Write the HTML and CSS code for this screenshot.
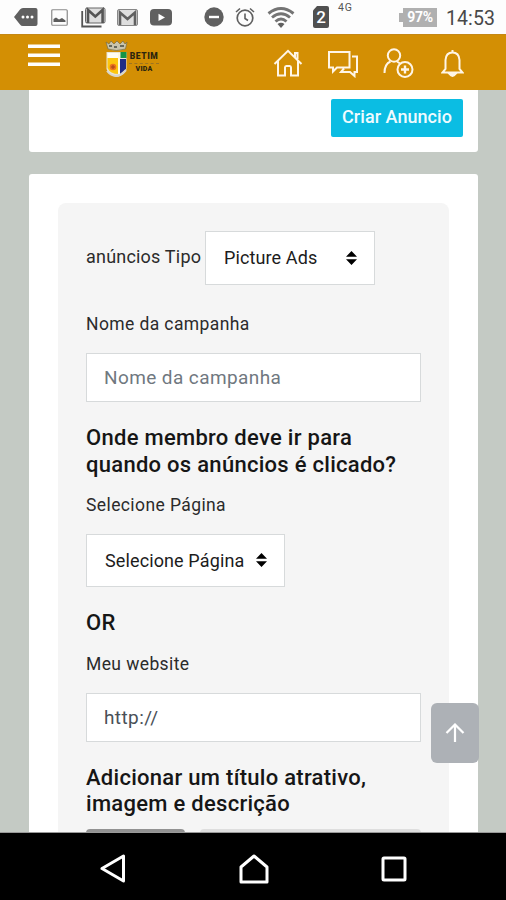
FILE: index.html
```html
<!DOCTYPE html>
<html lang="pt-BR">
<head>
<meta charset="utf-8">
<title>Criar Anuncio</title>
<link rel="stylesheet" href="styles.css">
</head>
<body>
<div class="phone">
  <div class="status">
    <svg class="s-more" width="24" height="18" viewBox="0 0 24 18"><path d="M0 9 6 1.5Q7 0 9 0H21.500Q23.500 0 23.500 2V16Q23.500 18 21.500 18H9Q7 18 6 16.500Z" fill="#606060"/><g fill="#fff"><circle cx="9" cy="9" r="1.500"/><circle cx="13.500" cy="9" r="1.500"/><circle cx="18" cy="9" r="1.500"/></g></svg>
    <svg class="s-pic" width="17" height="17" viewBox="0 0 17 17"><rect x=".75" y=".75" width="15.500" height="15.500" rx="1" fill="#fcfcfc" stroke="#8a8a8a" stroke-width="1.200"/><path d="M2.500 13V10L5 8.500 8 10.500 11 9 14.500 11.500V13Z" fill="#5c5c5c"/></svg>
    <svg class="s-mails" width="25" height="21" viewBox="0 0 25 21"><path d="M1.200 4V19.500H20.500" fill="none" stroke="#555" stroke-width="1.800"/><rect x="4.500" y="1" width="19.500" height="15" rx="1.500" fill="#dedede" stroke="#666"/><path d="M7 16V3L14.300 9.500 21.600 3V16" fill="none" stroke="#555" stroke-width="2.600"/></svg>
    <svg class="s-mail" width="21" height="17" viewBox="0 0 21 17"><rect x=".5" y=".5" width="20" height="16" rx="1.500" fill="#dedede" stroke="#888"/><path d="M3 16V3.500L10.500 10 18 3.500V16" fill="none" stroke="#606060" stroke-width="2.600"/></svg>
    <svg class="s-play" width="22" height="17" viewBox="0 0 22 17"><rect width="22" height="16.500" rx="4" fill="#606060"/><path d="M8.500 4.800V12L15 8.400Z" fill="#fff"/></svg>
    <svg class="s-dnd" width="20" height="20" viewBox="0 0 20 20"><circle cx="10" cy="10" r="9.700" fill="#606060"/><path d="M5 10H15" stroke="#fff" stroke-width="2.400"/></svg>
    <svg class="s-alarm" width="20" height="20" viewBox="0 0 20 20" fill="none" stroke="#606060"><circle cx="10" cy="11" r="7.800" stroke-width="1.700"/><path d="M10 6.500V11.500L13 13.500M1 5 5 1.500M15 1.500 19 5" stroke-width="1.600"/></svg>
    <svg class="s-wifi" width="28" height="22" viewBox="0 0 28 22" fill="none" stroke="#747474" stroke-width="2.900"><path d="M1.500 6.500Q14-3.500 26.500 6.500M5 10.500Q14 3 23 10.500M8.500 14.500Q14 9.500 19.500 14.500"/><path d="M10.500 17Q14 14.500 17.500 17L14 21Z" fill="#606060" stroke="none"/></svg>
    <span class="sim">2</span>
    <span class="net">4G</span>
    <span class="batt">97%</span>
    <span class="clock">14:53</span>
  </div>
  <header class="bar">
    <svg class="menu" width="32" height="23" viewBox="0 0 32 23"><path d="M0 2.200H32M0 11.200H32M0 20.200H32" stroke="#fff" stroke-width="3.600"/></svg>
    <div class="logo">
      <svg width="23" height="38" viewBox="0 0 23 38"><path d="M1 2 4 4 6 1 9 4 12 1 15 4 18 1 20 4 22 2 20.500 9Q11 12 3 9Z" fill="#c9c4ac" stroke="#796f45" stroke-width=".7"/><path d="M4 6H7M9 7H12M15 6H19" stroke="#454b41" stroke-width="1.500"/><path d="M1.500 12H21.500V29Q20 35 11.500 37Q3 35 1.500 29Z" fill="#e8e4d4"/><path d="M2.500 18H14V34Q5 34 2.500 28Z" fill="#fdc60c"/><path d="M2.500 13H14V18H2.500Z" fill="#fffdf2"/><path d="M15.500 12H21.500V18H15.500Z" fill="#159447"/><path d="M14.500 19H21V29L15 34Z" fill="#202d84"/><path d="M13 13H15V34H13Z" fill="#fff9df"/><circle cx="8" cy="27" r="3.300" fill="#ec731c"/><path d="M6 27H10M8 25V29" stroke="#a54717"/><path d="M2 31Q6 36 11 36T21 30" fill="none" stroke="#d8d5ca" stroke-width="2"/></svg>
      <div class="logo-text"><b>BETIM</b><i></i><b class="vida">VIDA</b></div>
    </div>
    <svg class="i-home" width="30" height="28" viewBox="0 0 30 28"><path d="M1.500 15 15 1.800 28.500 15M5 12V26.500H12V18.500Q12 17 13.300 17H16.700Q18 17 18 18.500V26.500H25V12M22 8V4H24.500V10"/></svg>
    <svg class="i-chat" width="32" height="28" viewBox="0 0 32 28"><path d="M2 2H22.500V17.500H10L6 21.500V17.500H2ZM25 6.500H30V22H27.500V26L23 22H14L17 18.500"/></svg>
    <svg class="i-user" width="31" height="30" viewBox="0 0 31 30"><circle cx="11" cy="7.500" r="6.200"/><path d="M1.500 25Q1.500 16 7.500 13.500M14 13.500 17 15.500"/><circle cx="22" cy="21.500" r="7.500"/><path d="M22 17.500V25.500M18 21.500H26" stroke-width="2.400"/></svg>
    <svg class="i-bell" width="23" height="29" viewBox="0 0 23 29"><path d="M1.500 23.500H21.500L18.500 20V11Q18 3.500 11.500 3.500T4.500 11V20Z"/><path d="M8.500 25Q11.500 29 14.500 25ZM11.500 1V4"/></svg>
  </header>
  <main class="page">
    <section class="card top"><button class="create">Criar Anuncio</button></section>
    <section class="card">
      <form class="panel">
        <div class="row"><label class="type">anúncios Tipo</label>
          <div class="select short"><span>Picture Ads</span><svg width="11" height="14" viewBox="0 0 11 14"><path d="M0 5.700 5.500 0 11 5.700ZM0 8.300 5.500 14 11 8.300Z"/></svg></div></div>
        <label class="label campaign">Nome da campanha</label>
        <div class="input hint"><span>Nome da campanha</span></div>
        <h2>Onde membro deve ir para<br>quando os anúncios é clicado?</h2>
        <label class="label">Selecione Página</label>
        <div class="select long"><span>Selecione Página</span><svg width="11" height="14" viewBox="0 0 11 14"><path d="M0 5.700 5.500 0 11 5.700ZM0 8.300 5.500 14 11 8.300Z"/></svg></div>
        <h2>OR</h2>
        <label class="label">Meu website</label>
        <div class="input"><span class="url">http://</span></div>
        <h2>Adicionar um título atrativo,<br>imagem e descrição</h2>
        <div class="tabs"><i class="dark"></i><i class="light"></i></div>
      </form>
    </section>
  </main>
  <div class="up"><svg width="20" height="20" viewBox="0 0 20 20"><path d="M10 19V2M1.500 10 10 1.500 18.500 10" fill="none" stroke="#fff" stroke-width="2.200"/></svg></div>
  <nav class="nav">
    <svg class="back" width="26" height="29" viewBox="0 0 26 29"><path d="M2 14.500 23.500 2V27Z"/></svg>
    <svg class="home" width="30" height="30" viewBox="0 0 30 30"><path d="M2 28V13L15 2 28 13V28Z"/></svg>
    <svg class="recent" width="26" height="26" viewBox="0 0 26 26"><rect x="2" y="2" width="22" height="22" rx="1"/></svg>
  </nav>
</div>
</body>
</html>
```

FILE: styles.css
```css
* { box-sizing: border-box; }
body { margin: 0; font-family: Roboto, "Liberation Sans", sans-serif; color: #2b2b2b; }
svg { display: block; flex: none; }
.phone { position: relative; width: 506px; height: 900px; overflow: hidden; display: flex; flex-direction: column; background: #c4cac4; }

.status { height: 34px; flex: none; background: #fdfdfd; display: flex; align-items: center; padding-left: 14px; }
.s-pic { margin-left: 13px; }
.s-mails { margin: 0 0 0 13px; }
.s-mail { margin-left: 11px; }
.s-play { margin-left: 12px; }
.s-dnd { margin-left: 32px; }
.s-alarm { margin-left: 11px; }
.s-wifi { margin: 2px 0 0 12px; }
.sim { width: 16px; height: 22px; margin-left: 18px; background: #505050; border-radius: 2px; clip-path: polygon(25% 0, 100% 0, 100% 100%, 0 100%, 0 20%); color: #fff; font-size: 17px; font-weight: 500; line-height: 23px; text-align: center; }
.net { width: 17px; margin: -19px 0 0 9px; font-size: 10.5px; line-height: 12px; letter-spacing: .8px; color: #555; }
.batt { width: 38px; height: 19px; margin-left: 44px; padding-left: 4px; background: linear-gradient(#b0b0b0, #b0b0b0) 4px 0 / 34px 19px no-repeat, linear-gradient(#b0b0b0, #b0b0b0) 0 5px / 4px 9px no-repeat; color: #fff; font-size: 14px; font-weight: 700; line-height: 19px; text-align: center; letter-spacing: -.3px; }
.clock { margin: 3px 0 0 9px; font-size: 19.5px; line-height: 24px; letter-spacing: .1px; color: #484848; }

.bar { height: 56px; flex: none; background: #d38f04; display: flex; align-items: flex-start; padding-left: 28px; border-top: 1px solid #c58814; }
.bar > svg { fill: none; stroke: #fff5e6; stroke-width: 2; }
.menu { margin-top: 9px; }
.logo { display: flex; width: 55px; margin: 5px 0 0 45px; }
.logo-text { width: 32px; display: flex; flex-direction: column; align-items: center; padding-top: 12px; color: #2c250e; }
.logo-text b { font-size: 8.5px; line-height: 9px; font-weight: 900; letter-spacing: .6px; }
.logo-text i { width: 30px; margin: 2px 0; border-top: 1px dashed #9c7422; }
.logo-text .vida { font-size: 7px; line-height: 7px; letter-spacing: .2px; }
.i-home { margin: 14px 0 0 113px; }
.i-chat { margin: 15px 0 0 24px; }
.i-user { margin: 13px 0 0 24px; }
.i-bell { margin: 14px 0 0 27px; }

.page { height: 743px; flex: none; overflow: hidden; padding: 0 28px 0 29px; border-bottom: 1px solid #999; }
.card { background: #fff; border-radius: 3px; padding: 29px 29px 0; }
.card.top { height: 62px; margin-bottom: 22px; padding: 9px 15px 0; display: flex; justify-content: flex-end; align-items: flex-start; border-radius: 0 0 3px 3px; }
.create { width: 132px; height: 38px; border: 0; border-radius: 2px; padding: 0 0 3px; background: #0bbde3; color: #effbff; font: 500 18px Roboto, sans-serif; letter-spacing: .05px; white-space: nowrap; }
.panel { height: 700px; padding: 28px 28px 0; background: #f5f5f5; border-radius: 8px; }
.row { display: flex; align-items: center; height: 54px; }
.type { width: 119px; padding-bottom: 3px; font-size: 18px; letter-spacing: .2px; white-space: nowrap; }
.select, .input { display: flex; align-items: center; background: #fff; border: 1.5px solid #d7dadb; font-size: 18px; }
.select { height: 54px; justify-content: space-between; padding: 0 17px 1px 18px; color: #1c1c1c; white-space: nowrap; letter-spacing: .12px; }
.short { width: 170px; }
.long { width: 199px; height: 53px; }
.input { height: 49px; padding: 0 17px; color: #495057; font-size: 19px; letter-spacing: .4px; }
.hint { color: #70787f; }
.label { display: block; margin: 13px 0 15px; font-size: 17.500px; line-height: 28px; letter-spacing: .4px; }
.campaign { margin-top: 25px; }
h2 { margin: 23px 0 0; font-size: 22px; line-height: 26.5px; font-weight: 500; letter-spacing: .28px; color: #161616; white-space: nowrap; }
.tabs { display: flex; gap: 15px; margin-top: 11px; }
.tabs i { height: 30px; border-radius: 4px; }
.dark { width: 99px; background: #929292; }
.light { flex: 1; background: #dedede; }

.up { position: absolute; left: 431px; top: 703px; width: 48px; height: 60px; border-radius: 6px; background: #adb1b6; display: flex; align-items: center; justify-content: center; }

.nav { flex: 1; background: #000; display: flex; align-items: center; padding: 4px 0 0 100px; }
.nav svg { fill: none; stroke: #fff; stroke-width: 3; stroke-linejoin: round; }
.home { margin-left: 113px; }
.recent { margin-left: 112px; }
```
